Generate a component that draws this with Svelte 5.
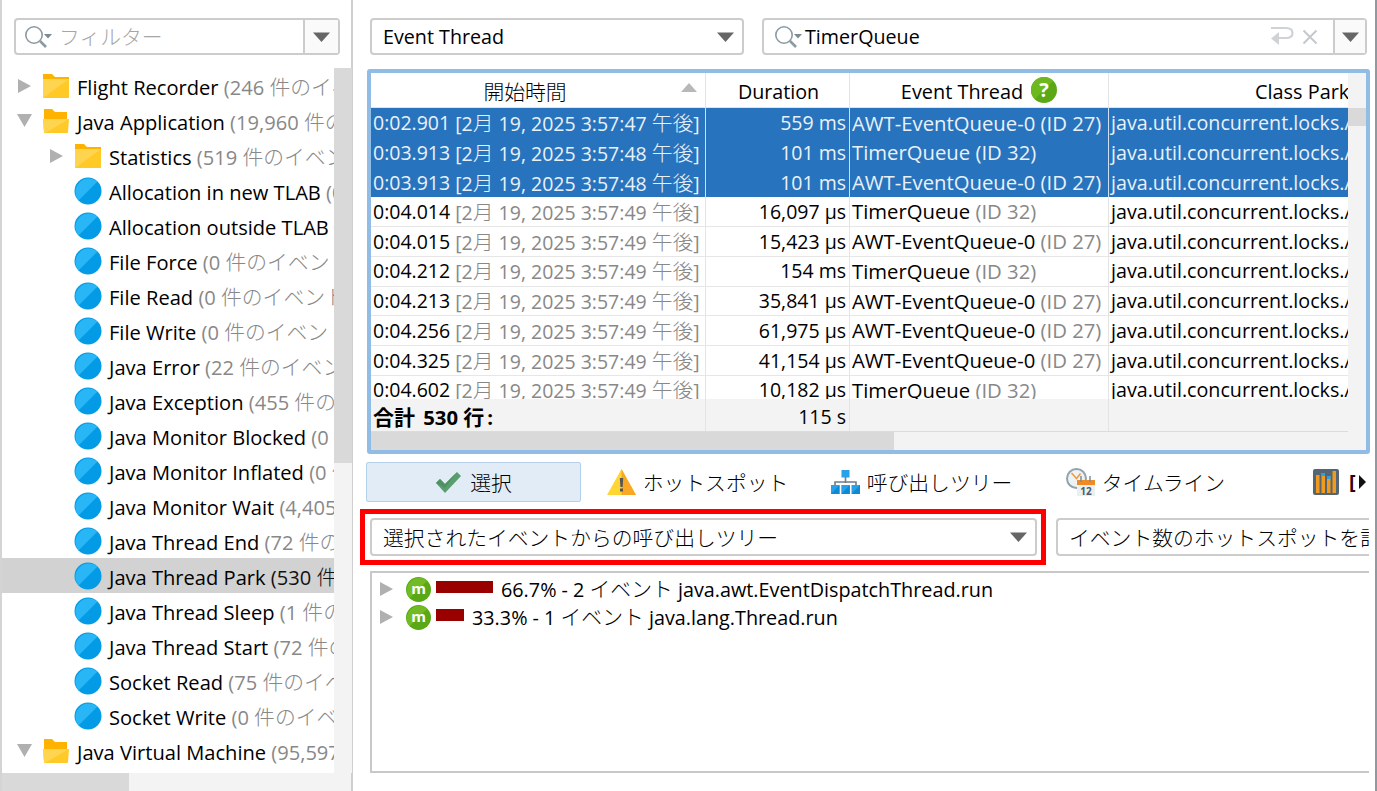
<script>
  const cjk = /([\u3000-\u9fff\uff00-\uffef]+)/;
  const runs = (t) => t.split(cjk).filter(Boolean).map((s) => ({ s, j: cjk.test(s) }));

  const tree = [
    ['folder', 0, 'Flight Recorder', '(246 件のイベント)', 'r'],
    ['open', 0, 'Java Application', '(19,960 件のイベント)', 'd'],
    ['folder', 1, 'Statistics', '(519 件のイベント)', 'r'],
    ['ev', 1, 'Allocation in new TLAB', '(0 件のイベント)'],
    ['ev', 1, 'Allocation outside TLAB', '(0 件のイベント)'],
    ['ev', 1, 'File Force', '(0 件のイベント)'],
    ['ev', 1, 'File Read', '(0 件のイベント)'],
    ['ev', 1, 'File Write', '(0 件のイベント)'],
    ['ev', 1, 'Java Error', '(22 件のイベント)'],
    ['ev', 1, 'Java Exception', '(455 件のイベント)'],
    ['ev', 1, 'Java Monitor Blocked', '(0 件のイベント)'],
    ['ev', 1, 'Java Monitor Inflated', '(0 件のイベント)'],
    ['ev', 1, 'Java Monitor Wait', '(4,405 件のイベント)'],
    ['ev', 1, 'Java Thread End', '(72 件のイベント)'],
    ['ev', 1, 'Java Thread Park', '(530 件のイベント)', '', true],
    ['ev', 1, 'Java Thread Sleep', '(1 件のイベント)'],
    ['ev', 1, 'Java Thread Start', '(72 件のイベント)'],
    ['ev', 1, 'Socket Read', '(75 件のイベント)'],
    ['ev', 1, 'Socket Write', '(0 件のイベント)'],
    ['open', 0, 'Java Virtual Machine', '(95,597 件のイベント)', 'd']
  ];

  const A = ['AWT-EventQueue-0', '(ID 27)'];
  const T = ['TimerQueue', '(ID 32)'];
  const rows = [
    ['0:02.901', '[2月 19, 2025 3:57:47 午後]', '559 ms', A, true],
    ['0:03.913', '[2月 19, 2025 3:57:48 午後]', '101 ms', T, true],
    ['0:03.913', '[2月 19, 2025 3:57:48 午後]', '101 ms', A, true],
    ['0:04.014', '[2月 19, 2025 3:57:49 午後]', '16,097 μs', T],
    ['0:04.015', '[2月 19, 2025 3:57:49 午後]', '15,423 μs', A],
    ['0:04.212', '[2月 19, 2025 3:57:49 午後]', '154 ms', T],
    ['0:04.213', '[2月 19, 2025 3:57:49 午後]', '35,841 μs', A],
    ['0:04.256', '[2月 19, 2025 3:57:49 午後]', '61,975 μs', A],
    ['0:04.325', '[2月 19, 2025 3:57:49 午後]', '41,154 μs', A],
    ['0:04.602', '[2月 19, 2025 3:57:49 午後]', '10,182 μs', T]
  ];
</script>

{#snippet txt(t)}{#each runs(t) as r}{#if r.j}<span class="j">{r.s}</span>{:else}{r.s}{/if}{/each}{/snippet}

{#snippet caret()}
  <svg class="caret" width="17" height="10" viewBox="0 0 17 10"><path d="M0 0.5h17L8.500 10z" fill="#666"/></svg>
{/snippet}

{#snippet lens()}
  <svg class="lens" width="30" height="26" viewBox="0 0 30 26">
    <circle cx="11" cy="11" r="8.200" fill="none" stroke="#8c9aa3" stroke-width="1.600"/>
    <path d="M17 17l6 6" stroke="#8c9aa3" stroke-width="2.600"/>
    <path d="M21 10h8l-4 4.500z" fill="#7d8a92"/>
  </svg>
{/snippet}

{#snippet arrow(dir)}
  {#if dir === 'r'}
    <svg width="15" height="16" viewBox="0 0 15 16"><path d="M1 1l13 7-13 7z" fill="#b0b0b0"/></svg>
  {:else if dir === 'd'}
    <svg width="15" height="15" viewBox="0 0 15 15"><path d="M0 1h15L7.500 14z" fill="#b0b0b0"/></svg>
  {:else}
    <span class="noarrow"></span>
  {/if}
{/snippet}

{#snippet folder(open)}
  <svg width="28" height="26" viewBox="0 0 28 26">
    {#if open}
      <path d="M2 1h8l3 3h12v8H2z" fill="#ffb300"/>
      <path d="M1 11h26l-1 13a1 1 0 0 1-1 1H3a1 1 0 0 1-1-1z" fill="#ffca28"/>
      <path d="M1 11h26L3 25H2z" fill="#ffd54f"/>
    {:else}
      <path d="M1 1h9l3 3h14v4H1z" fill="#ffb300"/>
      <path d="M1 6h26v19H1z" fill="#ffca28"/>
      <path d="M1 6h26L1 25z" fill="#ffd54f"/>
    {/if}
  </svg>
{/snippet}

{#snippet evIcon()}
  <svg width="28" height="28" viewBox="0 0 28 28">
    <circle cx="14" cy="14" r="13.500" fill="#039be5"/>
    <path d="M4.500 23.500A13.500 13.500 0 0 1 23.500 4.500z" fill="#29b6f6"/>
  </svg>
{/snippet}

{#snippet mIcon()}
  <svg class="m" width="25" height="25" viewBox="0 0 25 25">
    <circle cx="12.500" cy="12.500" r="12.500" fill="#5aa815"/>
    <path d="M3.700 21.300A12.500 12.500 0 0 1 21.300 3.700z" fill="#72bb24"/>
    <text x="12.500" y="17" text-anchor="middle" class="mtext">m</text>
  </svg>
{/snippet}

<div class="root">
  <aside class="left">
    <div class="filter">
      <div class="filter-input">{@render lens()}<span class="ph j">フィルター</span></div>
      <div class="dropbtn">{@render caret()}</div>
    </div>
    <div class="treewrap">
      <div class="tree">
        {#each tree as [kind, depth, name, count, dir, sel]}
          <div class="node" class:sel class:child={depth === 1}>
            <span class="tw">{@render arrow(dir)}</span>
            <span class="ic">
              {#if kind === 'ev'}{@render evIcon()}{:else}{@render folder(kind === 'open')}{/if}
            </span>
            <span class="label">{name} <span class="count">{@render txt(count)}</span></span>
          </div>
        {/each}
      </div>
      <div class="vscroll"><div class="vthumb"></div></div>
    </div>
    <div class="hscroll"><div class="hthumb"></div></div>
  </aside>

  <main class="right">
    <div class="toprow">
      <div class="combo thread"><span>Event Thread</span>{@render caret()}</div>
      <div class="search">
        <div class="search-input">
          {@render lens()}
          <span class="q">TimerQueue</span>
          <svg class="ret" width="24" height="22" viewBox="0 0 24 22">
            <path d="M1 2h15c4 0 6.500 2 6.500 5s-2.500 5-6.500 5H7" fill="none" stroke="#cfd3d6" stroke-width="2.200"/>
            <path d="M9 6v13L1 12.500z" fill="#cfd3d6"/>
          </svg>
          <svg class="x" width="16" height="16" viewBox="0 0 16 16"><path d="M1.500 1.500l13 13M14.500 1.500l-13 13" stroke="#c6c9cc" stroke-width="2"/></svg>
        </div>
        <div class="dropbtn small">{@render caret()}</div>
      </div>
    </div>

    <section class="table">
      <div class="tmain">
        <div class="tleft">
          <div class="thead">
            <div class="c c1 hc h1"><span class="j">開始時間</span><svg class="sort" width="16" height="9" viewBox="0 0 16 9"><path d="M8 0l8 9H0z" fill="#b8b8b8"/></svg></div>
            <div class="c c2 hc h2">Duration</div>
            <div class="c c3 hc">Event Thread<svg class="help" width="26" height="26" viewBox="0 0 26 26">
                <circle cx="13" cy="13" r="13" fill="#5aa815"/>
                <path d="M3.800 22.200A13 13 0 0 1 22.200 3.800z" fill="#6db81f"/>
                <text x="13" y="20" text-anchor="middle" class="qm">?</text>
              </svg></div>
            <div class="c c4 hc h4">Class Parked On</div>
          </div>
          <div class="tbody">
            {#each rows as [t, d, dur, th, sel]}
              <div class="row" class:sel>
                <div class="c c1">{t} <span class="dim">{@render txt(d)}</span></div>
                <div class="c c2">{dur}</div>
                <div class="c c3">{th[0]} <span class="dim">{th[1]}</span></div>
                <div class="c c4">java.util.concurrent.locks.AbstractQueuedSynchronizer</div>
              </div>
            {/each}
          </div>
          <div class="tfoot">
            <div class="c c1"><b><span class="j">合計</span> 530 <span class="j">行</span>:</b></div>
            <div class="c c2">115 s</div>
            <div class="c c3"></div>
            <div class="c c4"></div>
          </div>
        </div>
        <div class="tv"><div class="tvthumb"></div></div>
      </div>
      <div class="th"><div class="ththumb"></div></div>
    </section>

    <nav class="tabs">
      <div class="tab active">
        <svg width="26" height="23" viewBox="0 0 26 23"><path d="M1 12l4-4 5 5L22 1l4 4L10 22z" fill="#5b9e6e"/><path d="M1 12l4-4 5 5L22 1 10 17z" fill="#4f9163"/></svg>
        <span class="j">選択</span>
      </div>
      <div class="tab">
        <svg width="29" height="26" viewBox="0 0 29 26">
          <path d="M14.500 0L29 26H0z" fill="#ffd633"/><path d="M14.500 0L29 26H14.500z" fill="#f9a825"/>
          <path d="M12.800 9h3.400l-.6 9h-2.200z" fill="#555"/><rect x="13" y="19.500" width="3" height="3" fill="#555"/>
        </svg>
        <span class="j">ホットスポット</span>
      </div>
      <div class="tab">
        <svg width="29" height="24" viewBox="0 0 29 24">
          <path d="M14.500 7v6M4 16v-4h21v4" fill="none" stroke="#6b7d8a" stroke-width="1.600"/>
          <rect x="10.500" y="0" width="8" height="7.500" fill="#29a0ea"/>
          <rect x="0" y="15" width="8.500" height="9" fill="#29a0ea"/>
          <rect x="10.300" y="15" width="8.500" height="9" fill="#29a0ea"/>
          <rect x="20.500" y="15" width="8.500" height="9" fill="#29a0ea"/>
          <path d="M0 24l8.500-9v9zM10.300 24l8.500-9v9zM20.500 24l8.500-9v9z" fill="#0d8ad6"/>
        </svg>
        <span class="j">呼び出しツリー</span>
      </div>
      <div class="tab">
        <svg width="29" height="28" viewBox="0 0 29 28">
          <circle cx="10.500" cy="10.500" r="9.500" fill="#eef2f4" stroke="#90a4ae" stroke-width="2"/>
          <path d="M5.500 5l5 5.500 4-5" fill="none" stroke="#f09a37" stroke-width="1.500"/>
          <rect x="11" y="12" width="18" height="5" fill="#f08a24"/>
          <rect x="11" y="17" width="18" height="11" fill="#eceff1"/>
          <path d="M15 8v6M24 8v6" stroke="#78909c" stroke-width="1.500"/>
          <text x="20" y="27" text-anchor="middle" class="cal">12</text>
        </svg>
        <span class="j">タイムライン</span>
      </div>
      <div class="tab last">
        <svg width="26" height="26" viewBox="0 0 26 26">
          <rect width="26" height="26" rx="2" fill="#546673"/>
          <rect x="3" y="6" width="3.500" height="18" fill="#f29a1e"/>
          <rect x="8.500" y="4" width="3.500" height="20" fill="#f29a1e"/>
          <rect x="14" y="7" width="3.500" height="17" fill="#f29a1e"/>
          <rect x="19.500" y="2" width="3.500" height="22" fill="#f29a1e"/>
          <rect x="8.500" y="4" width="3.500" height="3" fill="#29a0ea"/>
          <rect x="14" y="7" width="3.500" height="3" fill="#29a0ea"/>
        </svg>
        <span class="lb">[</span>
        <svg class="more" width="9" height="14" viewBox="0 0 9 14"><path d="M1 0l7 7-7 7z" fill="#111"/></svg>
      </div>
    </nav>

    <div class="selrow">
      <div class="redbox">
        <div class="combo wide"><span class="j">選択されたイベントからの呼び出しツリー</span>{@render caret()}</div>
      </div>
      <div class="combo clipped"><span class="j">イベント数のホットスポットを計算</span></div>
    </div>

    <div class="ctree">
      <div class="cnode">
        {@render arrow('r')}{@render mIcon()}<span class="bar b1"></span>
        <span>66.7% - 2 <span class="j">イベント</span> java.awt.EventDispatchThread.run</span>
      </div>
      <div class="cnode">
        {@render arrow('r')}{@render mIcon()}<span class="bar b2"></span>
        <span>33.3% - 1 <span class="j">イベント</span> java.lang.Thread.run</span>
      </div>
    </div>
  </main>
</div>

<style>
  :global(body) { margin: 0; background: #fff; overflow: hidden; }
  .root {
    width: 1377px; height: 791px; display: flex; overflow: hidden; background: #fff;
    font-family: "Open Sans", "Noto Sans", "Noto Sans CJK JP", sans-serif;
    font-size: 20.1px; color: #000; line-height: 1;
  }
  .j { font-family: "Noto Sans CJK JP", sans-serif; font-size: 20.8px; font-weight: 300; }
  svg { flex: none; display: block; }

  .left {
    width: 353px; box-sizing: border-box; height: 791px; flex: none;
    border-left: 2px solid #d4d4d4; border-right: 2px solid #cfcfcf;
    display: flex; flex-direction: column;
  }
  .filter {
    margin: 18px 0 0 12px; width: 326px; height: 37px; box-sizing: border-box;
    border: 2px solid #ccc; border-radius: 4px; display: flex; background: #fff; flex: none;
  }
  .filter-input { flex: 1; display: flex; align-items: center; padding-left: 7px; gap: 6px; }
  .ph { color: #a6a6a6; }
  .dropbtn {
    width: 33px; background: #fafafa; border-left: 2px solid #ccc;
    display: flex; align-items: center; justify-content: center;
  }
  .dropbtn.small { width: 30px; }
  .treewrap { margin-top: 13px; height: 705px; display: flex; flex: none; }
  .tree { width: 332px; flex: none; overflow: hidden; }
  .node {
    height: 35px; display: flex; align-items: center; white-space: nowrap; overflow: hidden;
    padding-left: 15px;
  }
  .node.child { padding-left: 47px; }
  .node.sel { background: #d2d2d2; }
  .tw { width: 15px; flex: none; display: flex; justify-content: center; }
  .noarrow { width: 15px; height: 1px; }
  .ic { margin-left: 10px; margin-right: 7px; width: 28px; flex: none; }
  .label { position: relative; top: 2px; }
  .count { color: #888; }
  .node.sel .count { color: #111; }
  .vscroll { width: 18px; flex: none; background: #f3f3f3; }
  .vthumb { height: 395px; background: #d9d9d9; }
  .hscroll { height: 18px; flex: none; background: #f3f3f3; }
  .hthumb { width: 127px; height: 18px; background: #d9d9d9; }

  .right { flex: 1; min-width: 0; display: flex; flex-direction: column; border-right: 2px solid #8f999f; }
  .toprow { display: flex; margin: 18px 0 0 17px; gap: 18px; flex: none; font-size: 19.7px; }
  .combo {
    height: 37px; box-sizing: border-box; border: 2px solid #ccc; border-radius: 4px; background: #fff;
    display: flex; align-items: center; justify-content: space-between; padding: 0 8px 0 11px;
    white-space: nowrap; overflow: hidden;
  }
  .thread { width: 374px; }
  .search {
    width: 605px; height: 37px; box-sizing: border-box; border: 2px solid #ccc; border-radius: 4px; display: flex;
  }
  .search-input { flex: 1; display: flex; align-items: center; padding-left: 9px; gap: 2px; }
  .q { flex: 1; }
  .ret { margin-right: 6px; }
  .x { margin-right: 15px; }

  .table {
    margin: 14px 0 0 14px; width: 1003px; height: 385px; box-sizing: border-box; flex: none;
    border: 4px solid #90bce6; border-radius: 3px; display: flex; flex-direction: column; overflow: hidden;
  }
  .tmain { display: flex; height: 359px; flex: none; }
  .tleft { width: 977px; flex: none; overflow: hidden; display: flex; flex-direction: column; }
  .tv { width: 18px; flex: none; background: #f3f3f3; padding-top: 35px; box-sizing: border-box; }
  .tvthumb { height: 18px; background: #d9d9d9; }
  .th { height: 18px; flex: none; background: #f3f3f3; }
  .ththumb { width: 523px; height: 18px; background: #d9d9d9; }
  .thead { height: 35px; flex: none; display: flex; box-sizing: border-box; border-bottom: 1px solid #e2e2e2; }
  .tbody { height: 291px; flex: none; overflow: hidden; }
  .row { height: 29.75px; box-sizing: border-box; display: flex; border-bottom: 1px solid #e6e6e6; }
  .row.sel { background: #2873bd; color: #e9f1f8; border-bottom: 0; }
  .tfoot { height: 33px; flex: none; display: flex; background: #f3f3f3; border-bottom: 1px solid #dcdcdc; box-sizing: border-box; }
  .tfoot .c { padding-top: 3px; }
  .c {
    box-sizing: border-box; flex: none; display: flex; align-items: center; white-space: pre; overflow: hidden;
    border-right: 1px solid #e4e4e4; padding-left: 2px;
  }
  .row.sel .c { border-right-color: #cfe0f0; }
  .c1 { width: 335px; font-size: 19.5px; }
  .c2 { width: 144px; font-size: 19.5px; justify-content: flex-end; padding: 0 3px 0 0; }
  .c3 { width: 259px; font-size: 20.3px; }
  .c4 { width: 239px; border-right: 0; padding-left: 2px; font-size: 19.7px; }
  .dim { color: #888; white-space: pre; }
  .row.sel .dim { color: inherit; }
  .hc { justify-content: center; position: relative; padding: 3px 0 0; font-size: 19.9px; }
  .h1 { padding-right: 26px; }
  .h2 { padding-left: 2px; font-size: 19.7px; }
  .sort { position: absolute; right: 8px; top: 10px; }
  .help { margin-left: 8px; position: relative; top: -2px; }
  .qm { font: bold 20px "Open Sans", sans-serif; fill: #fff; }
  .mtext { font: bold 15px "Open Sans", sans-serif; fill: #fff; }
  .cal { font: bold 10px "Open Sans", sans-serif; fill: #4a5a66; }
  .h4 { justify-content: flex-start; padding-left: 146px; }
  .tfoot b { font-weight: 700; font-size: 20.3px; }
  .tfoot b .j { font-weight: 700; font-size: 21px; margin-right: 3px; }

  .tabs { display: flex; gap: 9px; margin: 8px 0 0 13px; height: 40px; flex: none; width: 1003px; overflow: hidden; }
  .tab { width: 215px; flex: none; box-sizing: border-box; display: flex; align-items: center; justify-content: center; gap: 7px; }
  .tab.active { background: #e2ecf6; border: 1.500px solid #b4d0ea; border-radius: 2px; gap: 9px; }
  .tab.last { justify-content: flex-start; padding-left: 51px; gap: 0; }
  .tab.last .lb { margin-left: 10px; }
  .more { margin-left: 2px; }
  .lb { font-weight: 700; color: #300; }

  .selrow { display: flex; margin: 7px 0 0 7px; height: 56px; flex: none; align-items: center; }
  .redbox { box-sizing: border-box; border: 5px solid #fe0000; width: 686px; height: 56px; padding: 4px 5px; flex: none; }
  .wide { width: 667px; height: 38px; }
  .clipped { margin-left: 10px; width: 313px; height: 38px; border-right: 0; border-radius: 4px 0 0 4px; flex: none; }

  .ctree {
    margin: 6px 0 0 17px; width: 999px; height: 202px; box-sizing: border-box; flex: none;
    border: 2px solid #c8c8c8; border-right: 0; padding: 2px 0 0 7px; font-size: 19.8px;
  }
  .cnode { height: 28px; display: flex; align-items: center; white-space: pre; }
  .m { margin-left: 12px; }
  .bar { height: 12px; background: #990000; margin-left: 5px; margin-right: 8px; position: relative; top: -2px; }
  .b1 { width: 57px; }
  .b2 { width: 28px; }
</style>
